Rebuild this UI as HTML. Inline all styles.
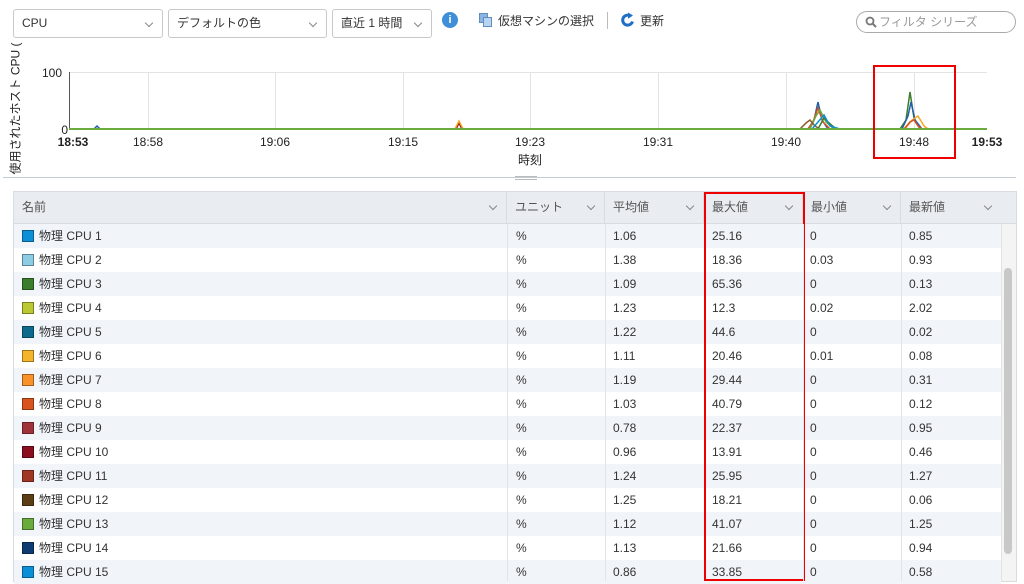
<!DOCTYPE html>
<html><head><meta charset="utf-8"><style>
*{margin:0;padding:0;box-sizing:border-box}
body{width:1024px;height:582px;background:#fff;font-family:"Liberation Sans","Noto Sans CJK JP",sans-serif;font-size:12px;color:#333;position:relative;overflow:hidden}
.a{position:absolute}
.sel{position:absolute;top:9px;height:29px;border:1px solid #c9c9c9;border-radius:3px;background:#fff;padding:0 0 0 8px;line-height:27px;font-size:12px;color:#333}
.chev{position:absolute;right:10px;top:10px;width:6px;height:6px;border-right:1px solid #888;border-bottom:1px solid #888;transform:rotate(45deg)}
.th{position:absolute;top:192px;height:32px;padding:0 0 0 8px;line-height:30px;color:#555;font-size:12px;border-right:1px solid #d8dbe0}
.th .chev{top:11px}
.row{position:absolute;left:14px;width:987px;height:24px}
.c{position:absolute;top:0;line-height:24px;height:24px;font-size:12px;color:#333;white-space:nowrap}
.sw{position:absolute;left:8px;top:6px;width:12px;height:12px}
</style></head><body>
<div class="sel" style="left:13px;width:150px">CPU<span class="chev"></span></div>
<div class="sel" style="left:168px;width:159px">デフォルトの色<span class="chev"></span></div>
<div class="sel" style="left:332px;width:100px">直近 1 時間<span class="chev"></span></div>
<div class="a" style="left:442px;top:12px;width:16px;height:16px;border-radius:50%;background:#3e8fd8;color:#fff;font-size:11px;font-weight:bold;text-align:center;line-height:16px">i</div>
<div class="a" style="left:479px;top:13px;width:9px;height:10px;background:#8ab6e0;border:1px solid #5c8fc4"></div>
<div class="a" style="left:483px;top:17px;width:9px;height:10px;background:#b8d4ef;border:1px solid #5c8fc4"></div>
<div class="a" style="left:498px;top:12px;font-size:12px">仮想マシンの選択</div>
<div class="a" style="left:607px;top:12px;width:1px;height:17px;background:#bbb"></div>
<svg class="a" style="left:620px;top:12px" width="16" height="16" viewBox="0 0 16 16"><path d="M12.5 9.5A5 5 0 1 1 9 3.3" fill="none" stroke="#1f6fc5" stroke-width="3"/><path d="M8 0.5L13 3.5L8 6.8Z" fill="#1f6fc5"/></svg>
<div class="a" style="left:640px;top:12px;font-size:12px">更新</div>
<div class="a" style="left:856px;top:11px;width:160px;height:22px;border:1px solid #aaa;border-radius:11px;padding:0 0 0 22px;line-height:20px;color:#999;font-size:12px">フィルタ シリーズ</div>
<svg class="a" style="left:865px;top:16px" width="12" height="12"><circle cx="5" cy="5" r="3.5" fill="none" stroke="#777" stroke-width="1.8"/><line x1="7.5" y1="7.5" x2="11" y2="11" stroke="#777" stroke-width="2"/></svg>
<div class="a" style="left:-60px;top:100px;width:150px;transform:rotate(-90deg);font-size:12px;color:#222;white-space:nowrap;text-align:center">使用されたホスト CPU (</div>
<svg class="a" style="left:0;top:60px" width="1024" height="120">
<g stroke="#e3e3e3" stroke-width="1">
<line x1="69" y1="12.5" x2="987" y2="12.5"/>
<line x1="148.5" y1="12" x2="148.5" y2="69"/><line x1="275.5" y1="12" x2="275.5" y2="69"/><line x1="403.5" y1="12" x2="403.5" y2="69"/><line x1="530.5" y1="12" x2="530.5" y2="69"/><line x1="658.5" y1="12" x2="658.5" y2="69"/><line x1="786.5" y1="12" x2="786.5" y2="69"/><line x1="914.5" y1="12" x2="914.5" y2="69"/>
</g>
<line x1="69.5" y1="12" x2="69.5" y2="69" stroke="#555"/>
<g fill="none" stroke-width="1.5">
<polyline stroke="#1e5fa8" points="808,69 814,60 818,42 822,60 828,69"/>
<polyline stroke="#d9531e" points="808,69 813,62 818,48 823,62 830,69"/>
<polyline stroke="#6aab3e" points="810,69 816,56 820,50 826,62 834,69"/>
<polyline stroke="#8a5a2b" points="800,69 806,63 810,60 815,66 820,69"/>
<polyline stroke="#3a7d2c" points="818,69 824,58 828,62 836,69"/>
<polyline stroke="#0b8fd6" points="812,69 818,62 824,55 830,66 840,69"/>
<polyline stroke="#3a7d2c" points="900,69 906,60 910,32 914,58 920,69"/>
<polyline stroke="#1e5fa8" points="902,69 908,56 911,42 915,60 922,69"/>
<polyline stroke="#f5a623" points="905,69 912,60 918,56 924,66 928,69"/>
<polyline stroke="#d9531e" points="904,69 910,62 914,60 918,66 922,69"/>
<polyline stroke="#8b0f1f" points="456,69 459,63 462,69"/>
<polyline stroke="#f5a623" points="455,69 459,61 463,69"/>
<polyline stroke="#1e5fa8" points="94,69 97,66 100,69"/>
</g>
<line x1="69" y1="69" x2="987" y2="69" stroke="#6aab3e" stroke-width="2"/>
<text x="62" y="17" font-size="12" text-anchor="end" fill="#222" font-family="Liberation Sans">100</text>
<text x="68" y="74" font-size="12" text-anchor="end" fill="#222" font-family="Liberation Sans">0</text>
<g font-size="12" text-anchor="middle" fill="#222" font-family="Liberation Sans">
<text x="73" y="86" font-weight="bold">18:53</text><text x="148" y="86">18:58</text><text x="275" y="86">19:06</text><text x="403" y="86">19:15</text><text x="530" y="86">19:23</text><text x="658" y="86">19:31</text><text x="786" y="86">19:40</text><text x="914" y="86">19:48</text><text x="987" y="86" font-weight="bold">19:53</text>
<text x="530" y="104" font-family="Liberation Sans,Noto Sans CJK JP">時刻</text>
</g>
</svg>
<div class="a" style="left:873px;top:65px;width:83px;height:94px;border:2px solid #e00"></div>
<div class="a" style="left:3px;top:177px;width:1013px;height:1px;background:#c5cbd3"></div>
<div class="a" style="left:515px;top:176px;width:22px;height:1px;background:#bbb"></div>
<div class="a" style="left:515px;top:179px;width:22px;height:1px;background:#bbb"></div>
<div class="a" style="left:13px;top:191px;width:1004px;height:391px;border:1px solid #d8dbe0"></div>
<div class="a" style="left:14px;top:192px;width:1002px;height:32px;background:#e9ecf0;border-bottom:1px solid #d8dbe0"></div>
<div class="th" style="left:14px;width:493px">名前<span class="chev"></span></div>
<div class="th" style="left:507px;width:98px">ユニット<span class="chev"></span></div>
<div class="th" style="left:605px;width:99px">平均値<span class="chev"></span></div>
<div class="th" style="left:704px;width:99px">最大値<span class="chev"></span></div>
<div class="th" style="left:803px;width:98px">最小値<span class="chev"></span></div>
<div class="th" style="left:901px;width:115px;border-right:none">最新値<span class="chev" style="right:25px"></span></div>
<div id="rows"></div>
<div class="a" style="left:1001px;top:224px;width:15px;height:357px;background:#f4f4f4;border-left:1px solid #e3e3e3"></div>
<div class="a" style="left:1004px;top:268px;width:8px;height:286px;background:#c8c8c8;border-radius:4px"></div>
<div class="a" style="left:704px;top:192px;width:101px;height:389px;border:2px solid #e00"></div>
<script>
var d=[["#0b8fd6","1.06","25.16","0","0.85"],["#8ccde3","1.38","18.36","0.03","0.93"],["#3a7d2c","1.09","65.36","0","0.13"],["#bcc832","1.23","12.3","0.02","2.02"],["#0d6a8c","1.22","44.6","0","0.02"],["#f5b52a","1.11","20.46","0.01","0.08"],["#f7932a","1.19","29.44","0","0.31"],["#d9531e","1.03","40.79","0","0.12"],["#a0303a","0.78","22.37","0","0.95"],["#8b0f1f","0.96","13.91","0","0.46"],["#a03524","1.24","25.95","0","1.27"],["#5c3d14","1.25","18.21","0","0.06"],["#6aab3e","1.12","41.07","0","1.25"],["#0f3b73","1.13","21.66","0","0.94"],["#0b8fd6","0.86","33.85","0","0.58"]];
var h="";d.forEach(function(r,i){var y=224+24*i;h+='<div class="row" style="top:'+y+'px;background:'+(i%2?'#fff':'#f1f4f9')+'"><div class="sw" style="background:'+r[0]+';border:1px solid rgba(0,0,0,.35)"></div><div class="c" style="left:25px">物理 CPU '+(i+1)+'</div><div class="c" style="left:502px">%</div><div class="c" style="left:599px">'+r[1]+'</div><div class="c" style="left:698px">'+r[2]+'</div><div class="c" style="left:796px">'+r[3]+'</div><div class="c" style="left:895px">'+r[4]+'</div></div>';});
document.getElementById("rows").innerHTML=h;
</script>
<div class="a" style="left:507px;top:224px;width:1px;height:357px;background:#e0e3e8"></div>
<div class="a" style="left:605px;top:224px;width:1px;height:357px;background:#e0e3e8"></div>
<div class="a" style="left:803px;top:224px;width:1px;height:357px;background:#e0e3e8"></div>
<div class="a" style="left:901px;top:224px;width:1px;height:357px;background:#e0e3e8"></div>
</body></html>
